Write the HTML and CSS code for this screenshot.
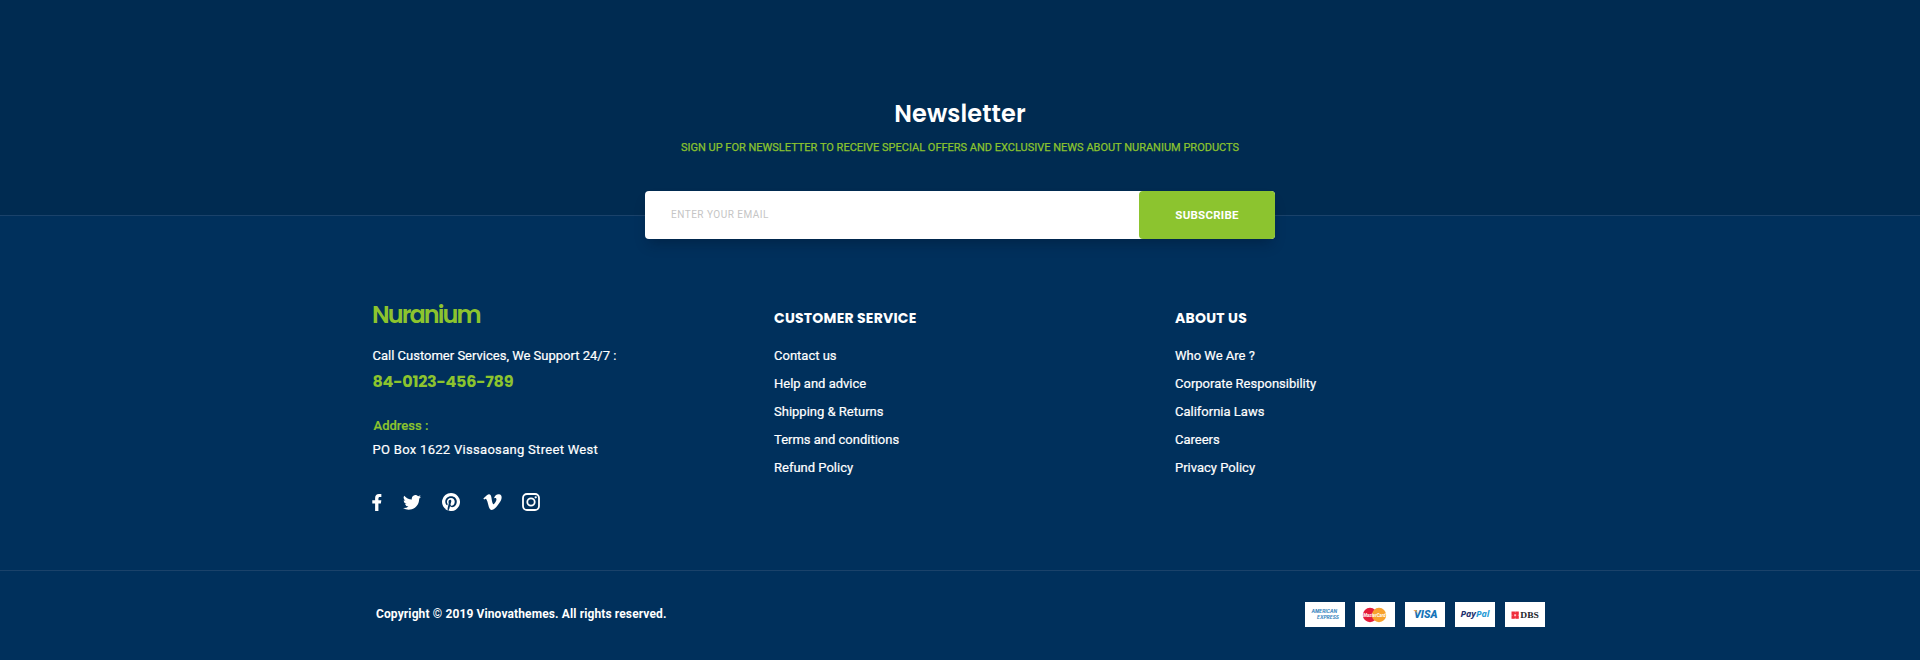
FILE: index.html
```html
<!DOCTYPE html>
<html lang="en">
<head>
<meta charset="utf-8">
<title>Nuranium</title>
<link rel="stylesheet" href="styles.css">
</head>
<body>
<section class="newsletter">
  <h2 class="newsletter-title"><span>Newsletter</span></h2>
  <p class="newsletter-text"><span>SIGN UP FOR NEWSLETTER TO RECEIVE SPECIAL OFFERS AND EXCLUSIVE NEWS ABOUT NURANIUM PRODUCTS</span></p>
  <form class="signup">
    <input class="signup-input" type="text" placeholder="ENTER YOUR EMAIL">
    <button class="signup-button" type="button"><span>SUBSCRIBE</span></button>
  </form>
</section>
<footer class="footer">
  <div class="columns">
    <div class="brand">
      <div class="logo"><span>Nuranium</span></div>
      <p class="call"><span>Call Customer Services, We Support 24/7 :</span></p>
      <p class="phone"><span>84-0123-456-789</span></p>
      <p class="address-label"><span>Address :</span></p>
      <p class="address"><span>PO Box 1622 Vissaosang Street West</span></p>
      <div class="social">
        <svg class="facebook" viewBox="0 0 10 18"><path d="M3 18V10H0V6.600H3V4.300C3 1.500 4.600 0 7 0H9.600V3.100H8C6.900 3.100 6.500 3.700 6.500 4.700V6.600H9.600L9.100 10H6.500V18Z"/></svg>
        <svg class="twitter" viewBox="0 0 24 20"><path d="M24 2.370a9.800 9.800 0 0 1-2.830.775 4.930 4.930 0 0 0 2.170-2.725 9.900 9.900 0 0 1-3.130 1.195 4.920 4.920 0 0 0-8.380 4.480A13.970 13.970 0 0 1 1.670.950a4.920 4.920 0 0 0 1.520 6.570 4.900 4.900 0 0 1-2.230-.616v.06a4.920 4.920 0 0 0 3.950 4.830 5 5 0 0 1-2.210.084 4.930 4.930 0 0 0 4.600 3.420A9.870 9.870 0 0 1 0 17.340a13.940 13.940 0 0 0 7.550 2.210c9.050 0 14-7.500 14-13.980l-.02-.64A10 10 0 0 0 24 2.370Z"/></svg>
        <svg class="pinterest" viewBox="0 0 24 24"><path d="M12 0a12 12 0 0 0-4.370 23.170c-.1-.95-.2-2.400.04-3.440l1.400-5.960s-.35-.72-.35-1.780c0-1.670.970-2.910 2.170-2.910 1.020 0 1.520.77 1.520 1.690 0 1.030-.66 2.570-1 4-.28 1.190.6 2.160 1.780 2.160 2.130 0 3.770-2.250 3.770-5.490 0-2.870-2.060-4.880-5-4.880-3.410 0-5.410 2.560-5.410 5.200 0 1.030.4 2.130.89 2.730.1.120.11.220.08.340l-.33 1.360c-.05.220-.17.270-.4.160-1.500-.7-2.430-2.880-2.430-4.640 0-3.780 2.750-7.250 7.920-7.250 4.160 0 7.390 2.970 7.390 6.930 0 4.130-2.610 7.460-6.230 7.460-1.220 0-2.360-.63-2.750-1.380l-.75 2.850c-.27 1.040-1 2.350-1.490 3.140A12 12 0 1 0 12 0Z"/></svg>
        <svg class="vimeo" viewBox="0 0 24 21"><path d="M23.980 4.920c-.1 2.340-1.740 5.540-4.900 9.600C15.820 18.770 13.050 21 10.780 21c-1.400 0-2.590-1.300-3.560-3.890L5.270 9.980C4.550 7.390 3.780 6.100 2.950 6.100c-.18 0-.81.380-1.890 1.130L0 5.770l3.510-3.130C5.100 1.270 6.290.550 7.080.480c1.870-.18 3.020 1.100 3.450 3.830.47 2.950.79 4.790.97 5.510.54 2.450 1.130 3.670 1.780 3.670.5 0 1.260-.8 2.270-2.390 1-1.600 1.540-2.810 1.610-3.640.14-1.380-.4-2.070-1.610-2.070-.58 0-1.170.13-1.780.390C14.950 1.960 17.180.080 20.470.180c2.440.07 3.610 1.650 3.510 4.740Z"/></svg>
        <svg class="instagram" viewBox="0 0 18 18"><rect x="1" y="1" width="16" height="16" rx="4" fill="none" stroke="#fff" stroke-width="1.800"/><circle cx="9" cy="9" r="3.700" fill="none" stroke="#fff" stroke-width="1.800"/><circle cx="13.700" cy="4.300" r="1.150"/></svg>
      </div>
    </div>
    <nav class="links">
      <h3 class="links-title customer"><span>CUSTOMER SERVICE</span></h3>
      <ul class="list"><li><span>Contact us</span></li><li><span>Help and advice</span></li><li><span>Shipping &amp; Returns</span></li><li><span>Terms and conditions</span></li><li><span>Refund Policy</span></li></ul>
    </nav>
    <nav class="links">
      <h3 class="links-title about"><span>ABOUT US</span></h3>
      <ul class="list"><li><span>Who We Are ?</span></li><li><span>Corporate Responsibility</span></li><li><span>California Laws</span></li><li><span>Careers</span></li><li><span>Privacy Policy</span></li></ul>
    </nav>
  </div>
  <div class="bottom">
    <p class="copyright"><span>Copyright © 2019 Vinovathemes. All rights reserved.</span></p>
    <div class="payments">
      <svg class="card" viewBox="0 0 40 25"><g class="amex"><text x="6.500" y="11.200" textLength="25.500" lengthAdjust="spacingAndGlyphs">AMERICAN</text><text x="12" y="17" textLength="22" lengthAdjust="spacingAndGlyphs">EXPRESS</text></g></svg>
      <svg class="card" viewBox="0 0 40 25"><circle cx="15" cy="13" r="7.200" fill="#e51b3b"/><circle cx="24" cy="13" r="7.200" fill="#f8a22d"/><text class="mastercard" x="8.200" y="15.200" textLength="22.500" lengthAdjust="spacingAndGlyphs">MasterCard</text></svg>
      <svg class="card" viewBox="0 0 40 25"><text class="visa" x="9" y="16" textLength="23.500" lengthAdjust="spacingAndGlyphs">VISA</text><path d="M8 8h3.300l1.400 4.200C11.800 10.200 10.200 8.800 8 8Z" fill="#f2a13c"/></svg>
      <svg class="card" viewBox="0 0 40 25"><text class="paypal" x="5.500" y="15.200" textLength="29" lengthAdjust="spacingAndGlyphs"><tspan fill="#1c2f6d">Pay</tspan><tspan fill="#1f9ad6">Pal</tspan></text></svg>
      <svg class="card" viewBox="0 0 40 25"><rect x="6.500" y="9.500" width="7.300" height="7.300" fill="#ef2d3c"/><path d="M9.500 9.500l.65 1.200.65-1.200zM9.500 16.800l.65-1.200.65 1.200zM6.500 12.500l1.200.65-1.200.65zM13.800 12.500l-1.200.65 1.200.65zM9.150 12.150h2v2h-2z" fill="#ffc6ca"/><text class="dbs" x="15.300" y="16.300" textLength="18.500" lengthAdjust="spacingAndGlyphs">DBS</text></svg>
    </div>
  </div>
</footer>
</body>
</html>
```

FILE: styles.css
```css
* { box-sizing: border-box; margin: 0; padding: 0; }
body { width: 1920px; height: 660px; overflow: hidden; background: #00305c; color: #fff; font-family: Roboto, "Liberation Sans", sans-serif; }
.newsletter { height: 216px; padding-top: 95px; background: #002b51; border-bottom: 1px solid #1a426a; display: flex; flex-direction: column; align-items: center; }
.newsletter-title { font: 600 24px/38px Poppins, Inter, sans-serif; letter-spacing: 0.100px; flex: none; }
.newsletter-text { font-size: 11px; line-height: 30px; color: #8cc42e; flex: none; -webkit-text-stroke: 0.250px currentColor; }
.signup { display: flex; flex: none; width: 630px; height: 48px; margin-top: 28px; border-radius: 4px; background: #fff; box-shadow: 0 8px 12px -4px rgba(0, 15, 35, 0.350); position: relative; }
.signup-input { flex: 1; border: 0; background: none; padding: 0 0 1px 26px; font: 10px Roboto, sans-serif; letter-spacing: 0.500px; outline: 0; }
.signup-input::placeholder { color: #c5c5c5; }
.signup-button { width: 136px; border: 0; border-radius: 4px; background: #8cc42f; color: #fff; font: 700 11.500px Roboto, sans-serif; letter-spacing: 0.250px; }
.columns { display: grid; grid-template-columns: 401px 401px 1fr; height: 354px; padding: 78px 0 0 373px; }
.logo { height: 48px; margin-left: -1px; font: 600 24px/42px Poppins, Inter, sans-serif; letter-spacing: -1.900px; color: #8cc42e; }
.call { margin-left: -0.500px; font-size: 13px; line-height: 28px; -webkit-text-stroke: 0.200px currentColor; }
.phone { margin-left: -0.500px; font: 700 16px/24px Poppins, Inter, sans-serif; letter-spacing: -0.250px; color: #8cc42e; }
.address-label { margin: 18px 0 0 0.600px; font-weight: 500; font-size: 13px; line-height: 28px; color: #8cc42e; -webkit-text-stroke: 0.200px currentColor; }
.address { margin-left: -0.500px; font-size: 13px; line-height: 20px; letter-spacing: 0.300px; -webkit-text-stroke: 0.200px currentColor; }
.social { height: 18px; margin-top: 33px; display: flex; align-items: center; fill: #fff; }
.facebook { width: 10px; height: 17px; margin-left: -1.500px; }
.twitter { width: 18px; height: 15px; margin-left: 21px; }
.pinterest { width: 18px; height: 18px; margin-left: 21px; }
.vimeo { width: 19px; height: 16px; margin-left: 23px; }
.instagram { width: 18px; height: 18px; margin-left: 20.500px; }
.links-title { height: 48px; font: 700 14px/48px Poppins, Inter, sans-serif; letter-spacing: 0.230px; }
.list { list-style: none; font-size: 13px; line-height: 28px; -webkit-text-stroke: 0.200px currentColor; }
.bottom { display: flex; justify-content: space-between; align-items: flex-start; height: 90px; border-top: 1px solid #1a426a; padding: 31px 375px 0 376px; }
.copyright { font-weight: 700; font-size: 12px; line-height: 25px; letter-spacing: 0.120px; }
.payments { display: flex; gap: 10px; }
.card { width: 40px; height: 25px; background: #fff; }
.amex { font: italic 700 4.500px Inter, sans-serif; fill: #3483bd; }
.mastercard { font: italic 700 5.500px Roboto, sans-serif; fill: #fff; }
.visa { font: italic 900 11px Roboto, sans-serif; fill: #1473b8; }
.paypal { font: italic 700 8.500px "Open Sans", sans-serif; }
.dbs { font: 700 9px "Liberation Serif", serif; fill: #24262b; }
```
